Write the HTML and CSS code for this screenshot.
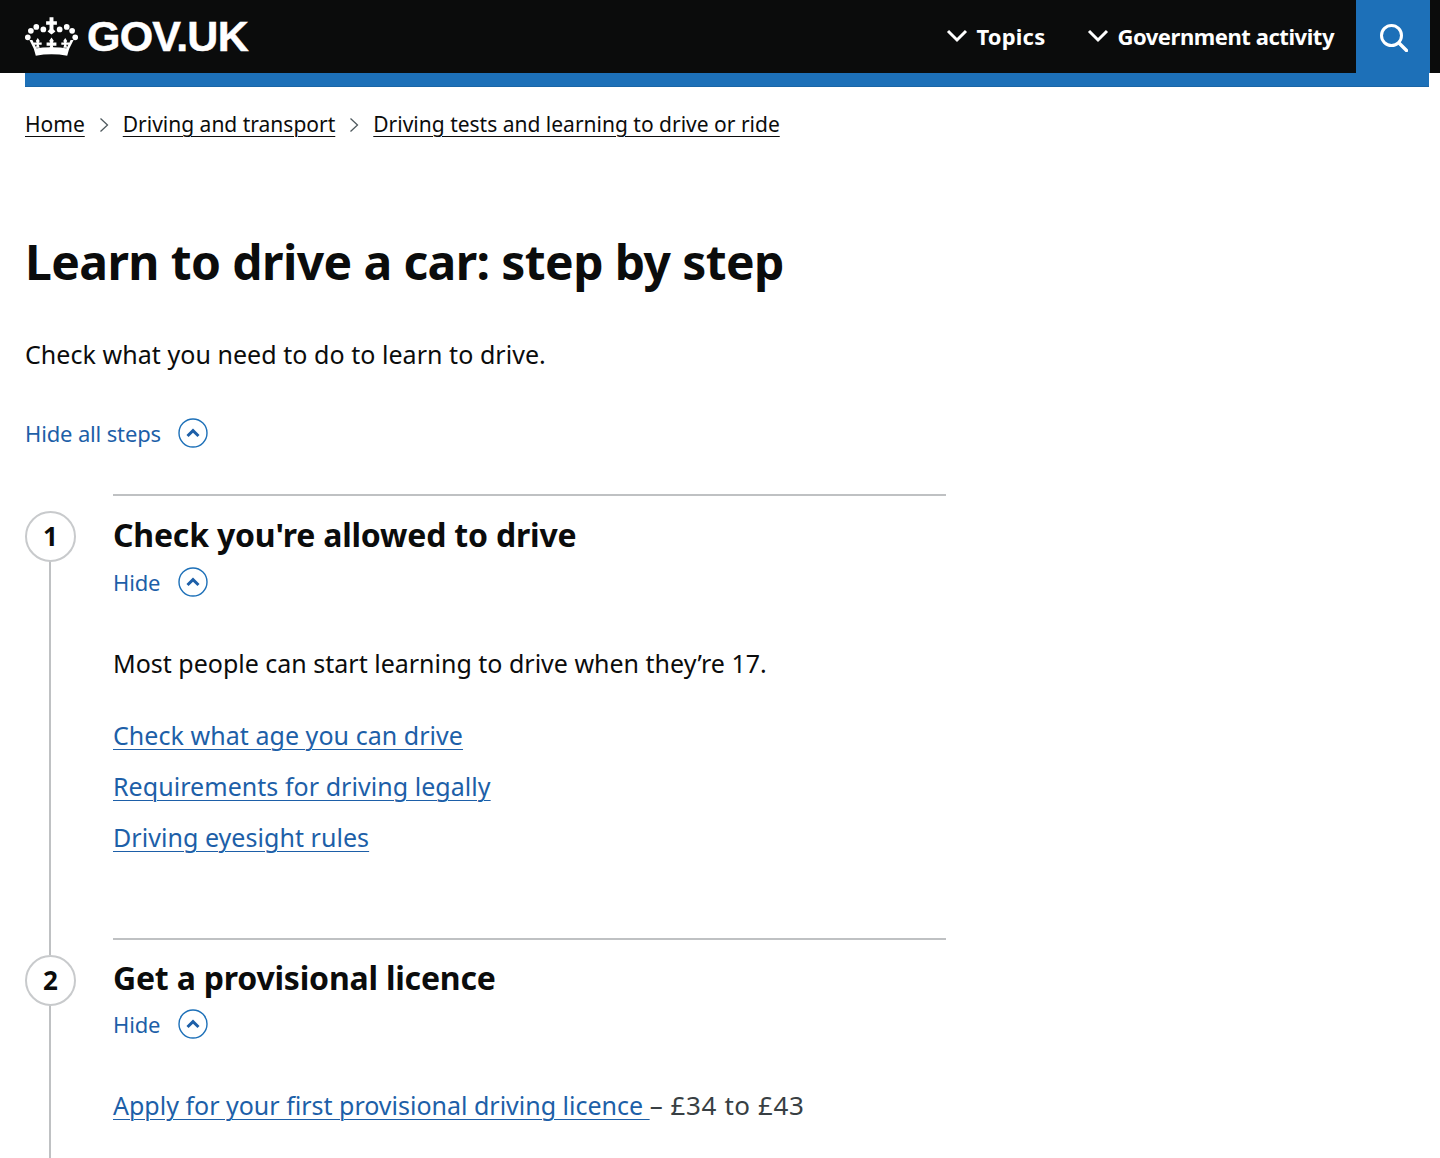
FILE: index.html
```html
<!DOCTYPE html>
<html lang="en">
<head>
<meta charset="utf-8">
<title>Learn to drive a car: step by step</title>
<link rel="stylesheet" href="styles.css">
</head>
<body>
<header class="topbar">
  <a class="logo" href="#">
    <svg class="crown" viewBox="0 0 54 40" aria-hidden="true">
      <g fill="#fff">
        <path d="M25 0h4v4h3.500v3.500H29V12l2 2.500-4 3-4-3 2-2.500V7.500h-3.500V4H25z"/>
        <circle cx="2.800" cy="20.300" r="2.900"/><circle cx="6" cy="13.700" r="2.900"/><circle cx="11.500" cy="9.700" r="2.900"/><circle cx="18.700" cy="12.300" r="2.900"/>
        <circle cx="51.200" cy="20.300" r="2.900"/><circle cx="48" cy="13.700" r="2.900"/><circle cx="42.500" cy="9.700" r="2.900"/><circle cx="35.300" cy="12.300" r="2.900"/>
        <path d="M9 32q18-3 36 0l-2 7q-16-3-32 0z"/>
        <path d="M4.500 23h3l4.500 9-2.500 1z"/>
        <path d="M49.500 23h-3L42 32l2.500 1z"/>
        <path d="M13 21l2 3-1 1.500h3v2.500h-3l1 3h-4l1-3H9v-2.500h3L11 24z"/>
        <path d="M27 20.500l2.300 3.200-1 2h3.700V29h-3.700l1 3h-4.600l1-3H22v-3.300h3.700l-1-2z"/>
        <path d="M41 21l2 3-1 1.500h3v2.500h-3l1 3h-4l1-3h-3v-2.500h3L39 24z"/>
      </g>
    </svg>
    <span class="logo-text">GOV.UK</span>
  </a>
  <nav class="topnav">
    <a class="navlink navlink-topics" href="#">
      <svg class="chev" viewBox="0 0 22 14" aria-hidden="true"><path d="M2 2l9 9 9-9" fill="none" stroke="#fff" stroke-width="3"/></svg>
      <span>Topics</span>
    </a>
    <a class="navlink navlink-gov" href="#">
      <svg class="chev" viewBox="0 0 22 14" aria-hidden="true"><path d="M2 2l9 9 9-9" fill="none" stroke="#fff" stroke-width="3"/></svg>
      <span>Government activity</span>
    </a>
    <a class="searchbtn" href="#" aria-label="Search">
      <svg viewBox="0 0 30 30" class="searchicon" aria-hidden="true"><circle cx="13.500" cy="13.500" r="10" fill="none" stroke="#fff" stroke-width="3"/><path d="M21 21l7.500 7.500" stroke="#fff" stroke-width="3.400" stroke-linecap="round"/></svg>
    </a>
  </nav>
</header>
<div class="bluebar"></div>
<main class="page">
  <nav class="crumbs">
    <a href="#">Home</a><svg class="sep" viewBox="0 0 10 16" aria-hidden="true"><path d="M1.500 1.500l7 6.500-7 6.500" fill="none" stroke="#505a5f" stroke-width="1.300"/></svg>
    <a href="#">Driving and transport</a><svg class="sep" viewBox="0 0 10 16" aria-hidden="true"><path d="M1.500 1.500l7 6.500-7 6.500" fill="none" stroke="#505a5f" stroke-width="1.300"/></svg>
    <a href="#">Driving tests and learning to drive or ride</a>
  </nav>
  <h1 class="title">Learn to drive a car: step by step</h1>
  <p class="lede">Check what you need to do to learn to drive.</p>
  <button class="toggle toggle-all" type="button"><span>Hide all steps</span>
    <svg class="updown" viewBox="0 0 30 30" aria-hidden="true"><circle cx="15" cy="15" r="14" fill="none" stroke="#1d70b8" stroke-width="1.400"/><path d="M9.500 18l5.500-5.300 5.500 5.300" fill="none" stroke="#1d5fa8" stroke-width="3"/></svg>
  </button>
  <ol class="steps">
    <li class="step step-one">
      <span class="num">1</span>
      <div class="step-body">
        <h2 class="step-title">Check you're allowed to drive</h2>
        <button class="toggle toggle-step" type="button"><span>Hide</span>
          <svg class="updown" viewBox="0 0 30 30" aria-hidden="true"><circle cx="15" cy="15" r="14" fill="none" stroke="#1d70b8" stroke-width="1.400"/><path d="M9.500 18l5.500-5.300 5.500 5.300" fill="none" stroke="#1d5fa8" stroke-width="3"/></svg>
        </button>
        <p class="copy">Most people can start learning to drive when they’re 17.</p>
        <ul class="links">
          <li><a href="#">Check what age you can drive</a></li>
          <li><a href="#">Requirements for driving legally</a></li>
          <li><a href="#">Driving eyesight rules</a></li>
        </ul>
      </div>
    </li>
    <li class="step step-two">
      <span class="num">2</span>
      <div class="step-body">
        <h2 class="step-title step-title-two">Get a provisional licence</h2>
        <button class="toggle toggle-step-two" type="button"><span>Hide</span>
          <svg class="updown" viewBox="0 0 30 30" aria-hidden="true"><circle cx="15" cy="15" r="14" fill="none" stroke="#1d70b8" stroke-width="1.400"/><path d="M9.500 18l5.500-5.300 5.500 5.300" fill="none" stroke="#1d5fa8" stroke-width="3"/></svg>
        </button>
        <p class="apply"><a href="#">Apply for your first provisional driving licence </a><span class="cost">– £34 to £43</span></p>
      </div>
    </li>
  </ol>
</main>
</body>
</html>
```
FILE: styles.css
```css
* { box-sizing: border-box; }
html, body { margin: 0; padding: 0; }
body {
  height: 1158px;
  overflow: hidden;
  background: #fff;
  color: #0b0c0c;
  font-family: "Noto Sans", "Liberation Sans", sans-serif;
}
a { color: inherit; }
.topbar {
  height: 73px;
  background: #0b0c0c;
  display: flex;
  justify-content: space-between;
  align-items: stretch;
  padding: 0 10px 0 25px;
}
.logo {
  display: flex;
  align-items: center;
  gap: 9px;
  text-decoration: none;
  color: #fff;
}
.crown { width: 53px; height: 40px; margin-bottom: 0; }
.logo-text {
  font-family: "Liberation Sans", Arial, sans-serif;
  font-weight: 700;
  font-size: 43px;
  letter-spacing: -0.8px;
  -webkit-text-stroke: 0.5px #fff;
}
.topnav { display: flex; align-items: stretch; }
.navlink {
  display: flex;
  align-items: center;
  gap: 8px;
  color: #fff;
  text-decoration: none;
  font-size: 22px;
  font-weight: 700;
  padding-bottom: 1px;
}
.navlink-topics { margin-right: 42px; letter-spacing: 0.2px; }
.navlink-gov { margin-right: 22px; letter-spacing: -0.45px; }
.chev { width: 22px; height: 14px; }
.searchbtn {
  width: 74px;
  background: #1d70b8;
  display: flex;
  align-items: center;
  justify-content: center;
}
.searchicon { width: 30px; height: 30px; }
.bluebar {
  height: 14px;
  margin: 0 11px 0 25px;
  background: #1d70b8;
  border-bottom: 1px solid #1a65a6;
}
.page { padding: 0 25px; }
.crumbs {
  display: flex;
  align-items: center;
  height: 24px;
  margin-top: 25px;
  font-size: 21px;
}
.crumbs a { text-underline-offset: 4px; text-decoration-thickness: 1px; }
.sep { width: 10px; height: 16px; margin: 2px 14px 0 14px; }
.title {
  margin: 97px 0 0;
  font-size: 48px;
  line-height: 58px;
  font-weight: 700;
  letter-spacing: -0.6px;
}
.lede { margin: 45px 0 0; font-size: 25px; line-height: 36px; letter-spacing: 0.05px; }
.toggle {
  display: flex;
  align-items: center;
  border: 0;
  background: none;
  padding: 0;
  color: #1d5fa8;
  font: inherit;
  font-size: 22px;
  letter-spacing: -0.15px;
}
.toggle-all { margin-top: 46px; gap: 17px; }
.updown { width: 30px; height: 30px; }
.steps { list-style: none; margin: 46px 0 0; padding: 0; width: 921px; }
.step { position: relative; padding-left: 88px; }
.step::before {
  content: "";
  position: absolute;
  left: 24px;
  top: 61px;
  bottom: 0;
  width: 2px;
  background: #bfc1c3;
}
.step-one { height: 444px; }
.step-one::before { bottom: -17px; }
.step-two { height: 220px; }
.num {
  position: absolute;
  left: 0;
  top: 17px;
  width: 51px;
  height: 51px;
  border: 2px solid #c8cacc;
  border-radius: 50%;
  display: flex;
  align-items: center;
  justify-content: center;
  padding-bottom: 2px;
  font-size: 26px;
  font-weight: 700;
  background: #fff;
}
.step-body { border-top: 2px solid #bfc1c3; padding-top: 17px; }
.step-title { margin: 0; font-size: 32px; line-height: 44px; font-weight: 700; letter-spacing: -0.2px; }
.step-title-two { margin-top: -1px; }
.toggle-step { margin-top: 10px; gap: 18px; }
.toggle-step-two { margin-top: 9px; gap: 18px; }
.copy { margin: 48px 0 0; font-size: 25px; line-height: 36px; }
.links { list-style: none; margin: 36px 0 0; padding: 0; font-size: 25px; line-height: 36px; color: #1d5fa8; letter-spacing: 0.05px; }
.links li + li { margin-top: 15px; }
.links a, .apply a { color: #1d5fa8; text-underline-offset: 4px; text-decoration-thickness: 1px; }
.apply { margin: 48px 0 0; font-size: 25px; line-height: 36px; }
.cost { color: #383f43; font-size: 26px; letter-spacing: 0.6px; }
```
